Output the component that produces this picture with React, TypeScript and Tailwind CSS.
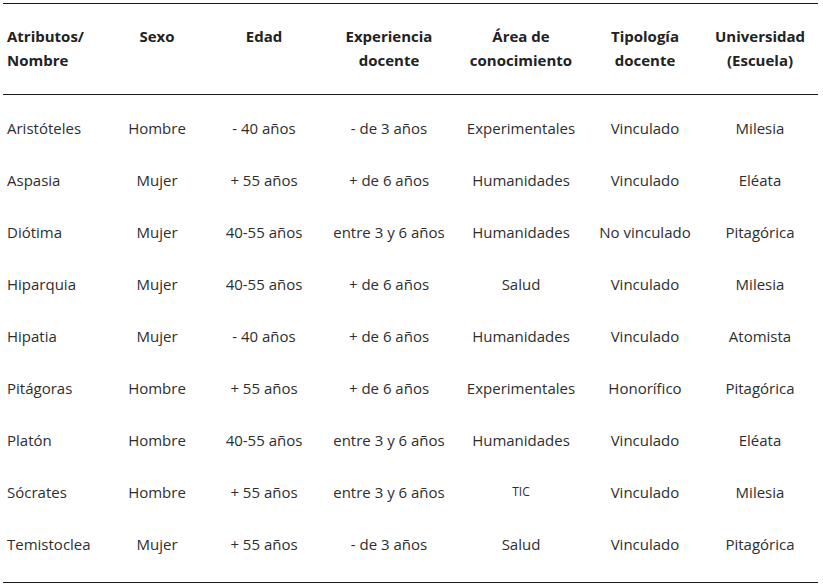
import React from "react";

const rows: string[][] = [
  ["Aristóteles", "Hombre", "- 40 años", "- de 3 años", "Experimentales", "Vinculado", "Milesia"],
  ["Aspasia", "Mujer", "+ 55 años", "+ de 6 años", "Humanidades", "Vinculado", "Eléata"],
  ["Diótima", "Mujer", "40-55 años", "entre 3 y 6 años", "Humanidades", "No vinculado", "Pitagórica"],
  ["Hiparquia", "Mujer", "40-55 años", "+ de 6 años", "Salud", "Vinculado", "Milesia"],
  ["Hipatia", "Mujer", "- 40 años", "+ de 6 años", "Humanidades", "Vinculado", "Atomista"],
  ["Pitágoras", "Hombre", "+ 55 años", "+ de 6 años", "Experimentales", "Honorífico", "Pitagórica"],
  ["Platón", "Hombre", "40-55 años", "entre 3 y 6 años", "Humanidades", "Vinculado", "Eléata"],
  ["Sócrates", "Hombre", "+ 55 años", "entre 3 y 6 años", "TIC", "Vinculado", "Milesia"],
  ["Temistoclea", "Mujer", "+ 55 años", "- de 3 años", "Salud", "Vinculado", "Pitagórica"],
];

const headers: string[][] = [
  ["Atributos/", "Nombre"],
  ["Sexo"],
  ["Edad"],
  ["Experiencia", "docente"],
  ["Área de", "conocimiento"],
  ["Tipología", "docente"],
  ["Universidad", "(Escuela)"],
];

const grid = "grid grid-cols-[107px_94px_120px_130px_134px_114px_116px]";

export default function App() {
  return (
    <div className="w-[823px] h-[587px] bg-white pt-[3px] pl-[3px] font-['Open_Sans','Noto_Sans',sans-serif] text-[15px] text-[#2e2e2e]">
      <div className="w-[815px] border-t border-b border-[#1a1a1a]">
        <div className={`${grid} h-[91px] border-b border-[#1a1a1a] items-start pt-[20px] font-bold text-[#222] leading-[24px]`}>
          {headers.map((h, i) => (
            <div key={i} className={i === 0 ? "pl-[4px] text-left" : "text-center"}>
              {h.map((l, j) => (
                <div key={j}>{l}</div>
              ))}
            </div>
          ))}
        </div>
        <div className="pt-[7px] pb-[12px]">
          {rows.map((r, i) => (
            <div key={i} className={`${grid} h-[52px] items-center leading-[24px]`}>
              {r.map((c, j) => (
                <div
                  key={j}
                  className={`${j === 0 ? "pl-[4px] text-left" : "text-center"} whitespace-nowrap ${c === "TIC" ? "text-[12px]" : ""}`}
                >
                  {c}
                </div>
              ))}
            </div>
          ))}
        </div>
      </div>
    </div>
  );
}
